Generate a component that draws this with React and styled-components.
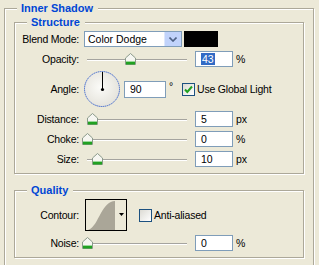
import React from 'react';
import styled, { createGlobalStyle } from 'styled-components';

const GlobalStyle = createGlobalStyle`
  html, body {
    margin: 0;
    padding: 0;
    background: #ece9d8;
    overflow: hidden;
  }
  body {
    font-family: "Liberation Sans", Arial, sans-serif;
    font-size: 10.5px;
    color: #000;
  }
`;

const Page = styled.div`
  padding: 8px 5px 0 4px;
`;

const Group = styled.div`
  position: relative;
  display: flex;
  flex-direction: column;
  gap: ${p => p.$gap || 4}px;
  border: 1px solid #aca899;
  box-shadow: inset 1px 1px 0 #fff, 1px 1px 0 #fff;
  padding: ${p => p.$pad};
  margin-top: ${p => p.$mt || 0}px;
`;

const Legend = styled.span`
  position: absolute;
  top: -7px;
  left: 12px;
  padding: 0 5px 0 4px;
  background: #ece9d8;
  color: #0046d5;
  font-size: 11px;
  font-weight: bold;
  line-height: 13px;
`;

const Row = styled.div`
  display: flex;
  align-items: center;
  height: ${p => p.$h || 16}px;
  white-space: nowrap;
`;

const Label = styled.span`
  width: 64px;
  flex-shrink: 0;
  margin-right: 5px;
  text-align: right;
  letter-spacing: -0.2px;
`;

const Select = styled.div`
  display: flex;
  align-items: center;
  width: 98px;
  height: 16px;
  box-sizing: border-box;
  border: 1px solid #7f9db9;
  background: #fff;
  padding-left: 3px;
`;

const SelectText = styled.span`
  flex: 1;
`;

const SelectButton = styled.span`
  display: flex;
  align-items: center;
  justify-content: center;
  width: 16px;
  height: 14px;
  background: #c1d3fb;
  border-left: 1px solid #dde7fd;
`;

const Swatch = styled.div`
  width: 34px;
  height: 16px;
  margin-left: 2px;
  background: #000;
`;

const SliderWrap = styled.div`
  position: relative;
  width: 106px;
  height: 16px;
  flex-shrink: 0;
  margin-right: 5px;
`;

const Track = styled.div`
  margin: 8px 3px 0;
  height: 1px;
  background: #a5a49f;
  border-bottom: 1px solid #fff;
`;

const Thumb = styled.svg`
  position: absolute;
  top: 2px;
`;

const NumberBox = styled.div`
  width: ${p => p.$w || 38}px;
  height: ${p => p.$h || 16}px;
  box-sizing: border-box;
  border: 1px solid #7f9db9;
  background: #fff;
  padding-left: 5px;
  line-height: ${p => (p.$h || 16) - 2}px;
  margin-left: ${p => p.$ml || 0}px;
`;

const Selected = styled.span`
  background: #316ac5;
  color: #fff;
  padding: 0 1px;
`;

const Unit = styled.span`
  margin-left: 3px;
`;

const Degree = styled.span`
  width: 13px;
  margin-left: 3px;
  align-self: flex-start;
  margin-top: 9px;
`;

const Box = styled.span`
  display: flex;
  align-items: center;
  justify-content: center;
  width: 13px;
  height: 13px;
  box-sizing: border-box;
  border: 1px solid #1c5180;
  background: linear-gradient(135deg, #dcdbd4, #fff);
  margin-left: ${p => p.$ml || 0}px;
`;

const CheckText = styled.span`
  margin-left: 2px;
  letter-spacing: -0.2px;
`;

const Contour = styled.div`
  width: 42px;
  height: 32px;
  box-sizing: border-box;
  border: 1px solid #000;
  margin-left: 1px;
`;

const Slider = ({ value }) => (
  <SliderWrap>
    <Track />
    <Thumb width="11" height="12" viewBox="0 0 11 12" style={{ left: 3 + value - 5 }}>
      <path d="M5.5 0.5 L10.5 5 V11.5 H0.5 V5 Z" fill="#f6f6f1" stroke="#8b9a8b" />
      <rect x="1" y="8" width="9" height="1" fill="#9bd89b" />
      <rect x="1" y="9" width="9" height="2.5" fill="#21a121" />
    </Thumb>
  </SliderWrap>
);

const Dial = () => (
  <svg width="36" height="36" viewBox="0 0 36 36">
    <defs>
      <radialGradient id="dialFill" cx="45%" cy="45%" r="60%">
        <stop offset="0%" stopColor="#fbfbf8" />
        <stop offset="100%" stopColor="#e4e2da" />
      </radialGradient>
    </defs>
    <circle cx="18" cy="18" r="17.5" fill="url(#dialFill)" stroke="#3f68cf" strokeDasharray="1.5 0.6" />
    <line x1="18.5" y1="18" x2="18.5" y2="1" stroke="#000" />
    <circle cx="18.5" cy="18.5" r="1.6" fill="#000" />
  </svg>
);

const Check = () => (
  <svg width="9" height="9" viewBox="0 0 9 9">
    <path d="M1 4.5 L3.3 7 L8 1.5" fill="none" stroke="#21a121" strokeWidth="2" />
  </svg>
);

const sliderRows = [
  { label: 'Distance:', value: 5, unit: 'px' },
  { label: 'Choke:', value: 0, unit: '%' },
  { label: 'Size:', value: 10, unit: 'px' },
];

const App = () => {
  return (
    <>
      <GlobalStyle />
      <Page>
        <Group $pad="13px 9px 12px" $gap={16}>
          <Legend>Inner Shadow</Legend>

          <Group $pad="8px 0 6px">
            <Legend>Structure</Legend>
            <Row>
              <Label>Blend Mode:</Label>
              <Select>
                <SelectText>Color Dodge</SelectText>
                <SelectButton>
                  <svg width="8" height="5" viewBox="0 0 8 5">
                    <path d="M0.5 0.5 L4 4 L7.5 0.5" fill="none" stroke="#4d6185" strokeWidth="1.6" />
                  </svg>
                </SelectButton>
              </Select>
              <Swatch />
            </Row>
            <Row>
              <Label>Opacity:</Label>
              <Slider value={43} />
              <NumberBox><Selected>43</Selected></NumberBox>
              <Unit>%</Unit>
            </Row>
            <Row $h={36}>
              <Label>Angle:</Label>
              <Dial />
              <NumberBox $w={42} $h={17} $ml={4}>90</NumberBox>
              <Degree>°</Degree>
              <Box><Check /></Box>
              <CheckText>Use Global Light</CheckText>
            </Row>
            {sliderRows.map(item => (
              <Row key={item.label}>
                <Label>{item.label}</Label>
                <Slider value={item.value} />
                <NumberBox>{item.value}</NumberBox>
                <Unit>{item.unit}</Unit>
              </Row>
            ))}
          </Group>

          <Group $pad="8px 0 6px">
            <Legend>Quality</Legend>
            <Row $h={32}>
              <Label>Contour:</Label>
              <Contour>
                <svg width="40" height="30" viewBox="0 0 40 30">
                  <path d="M2 30 C 8 28, 11 20, 15 13 S 23 1, 29 1 V30 Z" fill="#aaa698" />
                  <path d="M33 13 H38 L35.5 16 Z" fill="#000" />
                </svg>
              </Contour>
              <Box $ml={12} />
              <CheckText>Anti-aliased</CheckText>
            </Row>
            <Row>
              <Label>Noise:</Label>
              <Slider value={0} />
              <NumberBox>0</NumberBox>
              <Unit>%</Unit>
            </Row>
          </Group>
        </Group>
      </Page>
    </>
  );
};

export default App;
